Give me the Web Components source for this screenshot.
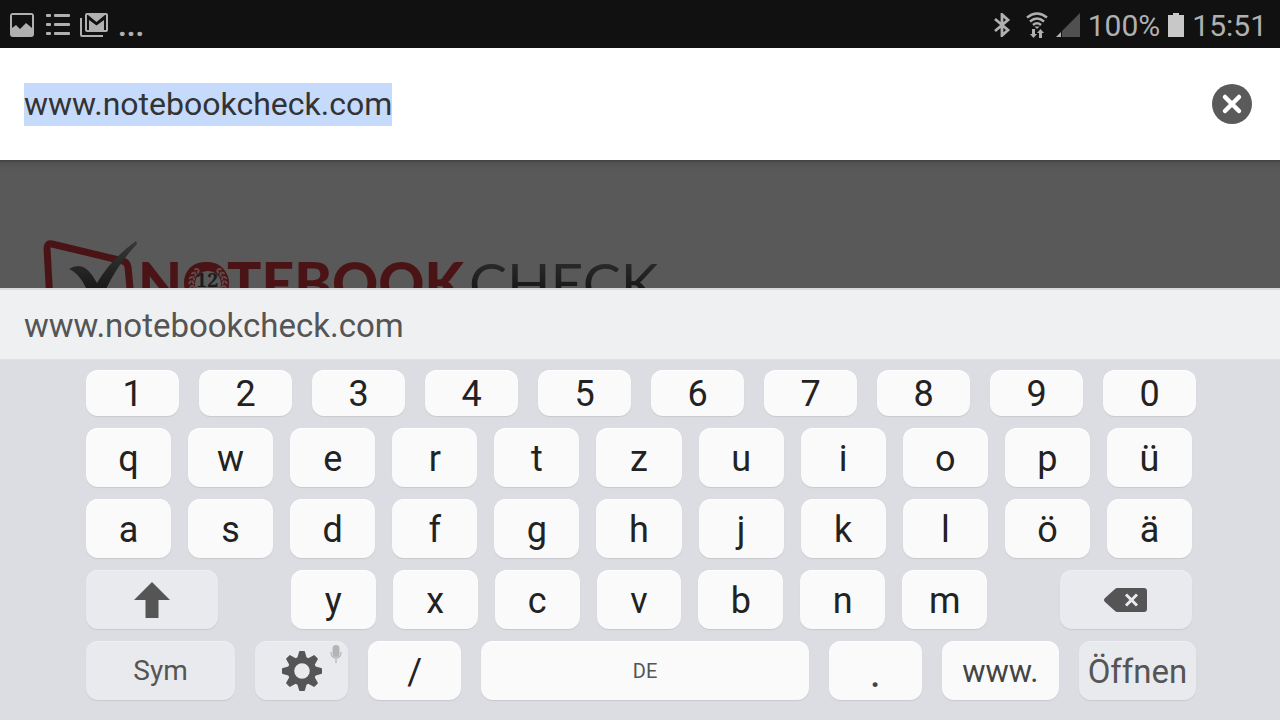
<!DOCTYPE html>
<html lang="de">
<head>
<meta charset="utf-8">
<meta name="viewport" content="width=device-width, initial-scale=1">
<title>www.notebookcheck.com</title>
<style>
  body {
    margin: 0;
    font-family: Roboto, "Noto Sans", sans-serif;
    background: #dcdde2;
  }
</style>
</head>
<body>
<phone-screen>
  <status-bar slot="status"></status-bar>
  <address-bar slot="address" value="www.notebookcheck.com"></address-bar>
  <web-page slot="page"></web-page>
  <word-suggestions slot="keyboard">www.notebookcheck.com</word-suggestions>
  <soft-keyboard slot="keyboard"></soft-keyboard>
</phone-screen>

<script>
function attach(element, html) {
  const template = document.createElement('template');
  template.innerHTML = html;
  const root = element.attachShadow({ mode: 'open' });
  root.appendChild(template.content.cloneNode(true));
  return root;
}

class PhoneScreen extends HTMLElement {
  constructor() {
    super();
    attach(this, `
      <style>
        :host {
          display: flex;
          flex-direction: column;
          min-height: 100vh;
        }
        main {
          flex: 1;
          display: flex;
          min-height: 128px;
        }
      </style>
      <slot name="status"></slot>
      <slot name="address"></slot>
      <main><slot name="page"></slot></main>
      <slot name="keyboard"></slot>
    `);
  }
}

class StatusBar extends HTMLElement {
  constructor() {
    super();
    attach(this, `
      <style>
        :host {
          display: flex;
          justify-content: space-between;
          box-sizing: border-box;
          height: 48px;
          padding: 0 13px 0 10px;
          background: #111;
          color: #b0b0b0;
          font-size: 30px;
          line-height: 48px;
        }
        div {
          display: flex;
          align-items: center;
        }
        span, time { padding-top: 4px; }
        .notifications { gap: 10px; }
        .more { font-weight: 700; }
        .system { gap: 8px; }
        svg { display: block; margin-top: 2px; fill: currentColor; }
      </style>
      <div class="notifications">
        <svg width="24" height="24" viewBox="0 0 24 24">
          <path fill-rule="evenodd" d="M3 0h18a3 3 0 0 1 3 3v18a3 3 0 0 1-3 3H3a3 3 0 0 1-3-3V3a3 3 0 0 1 3-3zM2 2v13l4-3 4 4 6-6 6 5V2z"/>
        </svg>
        <svg width="26" height="24" viewBox="0 0 26 24">
          <g transform="translate(2 0)">
            <rect y="1" width="5" height="3" rx="1"/><rect x="8" y="1" width="16" height="3" rx="1"/>
            <rect y="10" width="5" height="3" rx="1"/><rect x="8" y="10" width="16" height="3" rx="1"/>
            <rect y="19" width="5" height="3" rx="1"/><rect x="8" y="19" width="16" height="3" rx="1"/>
          </g>
        </svg>
        <svg width="28" height="24" viewBox="0 0 28 24">
          <path d="M0 5h2v17h21v2H2a2 2 0 0 1-2-2z"/>
          <path fill-rule="evenodd" d="M7 0h19a2 2 0 0 1 2 2v15a2 2 0 0 1-2 2H7a2 2 0 0 1-2-2V2a2 2 0 0 1 2-2zM7 2v15h2V7l7.500 5.500L24 7v10h2V2h-1l-8.500 7L8 2z"/>
        </svg>
        <span class="more">...</span>
      </div>
      <div class="system">
        <svg width="24" height="24" viewBox="0 0 24 24" aria-label="Bluetooth">
          <path d="M1 6l13 11-6 5.500V1.500L14 7 1 18" fill="none" stroke="currentColor" stroke-width="2.800"/>
        </svg>
        <svg width="22" height="26" viewBox="0 0 22 26" aria-label="WLAN">
          <g fill="none" stroke="currentColor" stroke-width="2.400">
            <path d="M1 5.500Q11-2.500 21 5.500"/>
            <path d="M4 9.500q7-6 14 0"/>
            <path d="M7 13q4-3.500 8 0"/>
          </g>
          <path d="M8.500 14.500h5L11 17z"/>
          <path d="M6 17h3v5h2l-3.500 4L4 22h2zM13 26h3v-5h2l-3.500-4-3.500 4h2z"/>
        </svg>
        <svg width="24" height="24" viewBox="0 0 24 24" aria-label="Signal">
          <path d="M6 18v6h18V0z" fill="#505050"/>
          <path d="M0 24l5-5v5z"/>
        </svg>
        <span>100%</span>
        <svg width="16" height="24" viewBox="0 0 16 24" aria-label="Akku">
          <path d="M5 0h6v2h5v22H0V2h5z" fill="#c8c8c8"/>
        </svg>
        <time>15:51</time>
      </div>
    `);
  }
}

class AddressBar extends HTMLElement {
  constructor() {
    super();
    this._shadowRoot = attach(this, `
      <style>
        :host {
          display: flex;
          align-items: center;
          gap: 24px;
          box-sizing: border-box;
          height: 112px;
          padding: 0 28px 0 24px;
          background: #fff;
        }
        input {
          flex: 1;
          min-width: 0;
          height: 43px;
          padding: 0;
          border: 0;
          outline: 0;
          background: none;
          color: #333;
          caret-color: transparent;
          font: 32px/43px Roboto, "Noto Sans", sans-serif;
        }
        input::selection {
          background: #c6dafc;
          color: #333;
        }
        button {
          width: 40px;
          height: 40px;
          padding: 0;
          border: 0;
          border-radius: 50%;
          background: #5a5a5a;
        }
        svg { display: block; }
      </style>
      <input type="text" aria-label="Adresse" spellcheck="false">
      <button type="button" aria-label="Löschen">
        <svg width="40" height="40" viewBox="0 0 40 40">
          <path d="M13 13l14 14M27 13L13 27" stroke="#fff" stroke-width="4.500" stroke-linecap="round"/>
        </svg>
      </button>
    `);
    this.$input = this._shadowRoot.querySelector('input');
    this.$button = this._shadowRoot.querySelector('button');
    this.$button.addEventListener('click', this._onClear.bind(this));
  }

  connectedCallback() {
    this.$input.value = this.getAttribute('value');
    this.$input.focus();
    this.$input.select();
  }

  type(text) {
    this.$input.setRangeText(text, this.$input.selectionStart, this.$input.selectionEnd, 'end');
    this.$input.focus();
  }

  erase() {
    const { selectionStart: start, selectionEnd: end } = this.$input;
    this.$input.setRangeText('', start === end ? Math.max(0, start - 1) : start, end, 'end');
    this.$input.focus();
  }

  _onClear() {
    this.$input.value = '';
    this.$input.focus();
  }
}

// the page behind the keyboard, dimmed while the address is edited
class WebPage extends HTMLElement {
  constructor() {
    super();
    const root = attach(this, `
      <style>
        :host {
          flex: 1;
          display: block;
          height: 128px;
          overflow: hidden;
          background: linear-gradient(#424242, #525252 3px, #595959 10px);
        }
        svg { display: block; }
        .red { fill: #4a1416; }
        .word { font-family: Lato, sans-serif; }
      </style>
      <svg width="700" height="160" viewBox="0 0 700 160" role="img" aria-label="Notebookcheck">
        <defs>
          <linearGradient id="ink" x1="0" y1="80" x2="0" y2="130" gradientUnits="userSpaceOnUse">
            <stop offset="0" stop-color="#383838"/>
            <stop offset="1" stop-color="#181818"/>
          </linearGradient>
        </defs>
        <path d="M51 160L47 88q0-5 5-4l71 17q4 1 5 6l5 53" fill="none" stroke="#4a1416" stroke-width="7"/>
        <path d="M69 109q13-8 23 6l5 8q14-24 39-42l1 3q-25 26-37 60l-8 0q-9-30-23-35z" fill="url(#ink)"/>
        <text class="word red" x="138" y="144" font-size="57" font-weight="900">NOTEBOOK</text>
        <text class="word" x="469" y="144" font-size="57" font-weight="400" fill="url(#ink)">CHECK</text>
        <circle cx="208" cy="123" r="21" class="red"/>
        <g class="leaves" fill="#62494a"></g>
        <circle cx="208" cy="124" r="13" fill="#595959"/>
        <text x="207" y="127" font-family="Noto Serif, Liberation Serif, serif" font-size="20" font-weight="700" text-anchor="middle" fill="#1c1c1c">12</text>
      </svg>
    `);
    const leaves = root.querySelector('.leaves');
    for (let angle = 40; angle <= 120; angle += 16) {
      [angle, -angle].forEach((a) => {
        const side = Math.sign(a);
        [15, 18].forEach((r, i) => {
          const leaf = document.createElementNS('http://www.w3.org/2000/svg', 'ellipse');
          leaf.setAttribute('rx', 1.1);
          leaf.setAttribute('ry', 2.4);
          leaf.setAttribute('transform', `translate(208 123) rotate(${a}) translate(0 ${-r}) rotate(${side * (i ? 55 : 120)})`);
          leaves.appendChild(leaf);
        });
      });
    }
  }
}

class WordSuggestions extends HTMLElement {
  constructor() {
    super();
    attach(this, `
      <style>
        :host {
          display: flex;
          box-sizing: border-box;
          height: 72px;
          padding: 0 24px;
          background: #eff0f2;
          border-top: 2px solid #dadada;
          border-bottom: 1px solid #e2e3e6;
        }
        button {
          padding: 2px 0 0;
          border: 0;
          background: none;
          color: #555;
          font: 33px/40px Roboto, "Noto Sans", sans-serif;
        }
      </style>
      <button type="button"><slot></slot></button>
    `);
  }
}

class SoftKey extends HTMLElement {
  constructor() {
    super();
    attach(this, `
      <style>
        :host {
          display: flex;
          flex: var(--width, 1) 1 0;
          min-width: 0;
        }
        button {
          position: relative;
          display: flex;
          flex: 1;
          align-items: center;
          justify-content: center;
          min-width: 0;
          padding: 2px 0 0;
          border: 0;
          border-radius: 12px;
          background: #fafafa;
          box-shadow: 0 1px 1px #c8c9ce, inset 0 1px #fff;
          color: #222;
          font: 36px/40px Roboto, "Noto Sans", sans-serif;
        }
        button:active { background: #e0e1e6; }
        :host([kind="function"]) button {
          background: #e9eaee;
          box-shadow: 0 1px 1px #c8c9ce, inset 0 1px #efeff3;
          color: #555;
        }
        :host([title]) button { padding: 0; }
        :host([size="dot"]) button { font-size: 44px; color: #444; }
        :host([size="open"]) button { font-size: 33px; }
        :host([size="word"]) button { font-size: 31px; color: #444; }
        :host([size="sym"]) button { padding: 0; font-size: 28px; }
        :host([size="space"]) button { padding: 0; font-size: 20px; color: #555; }
      </style>
      <button type="button"><slot></slot></button>
    `);
  }

  connectedCallback() {
    if (this.title) {
      this.shadowRoot.querySelector('button').setAttribute('aria-label', this.title);
    }
  }
}

class KeyRow extends HTMLElement {
  constructor() {
    super();
    attach(this, `
      <style>
        :host {
          display: flex;
          gap: 17px;
          height: 59px;
          padding-right: 4px;
        }
        :host([wide]) {
          gap: 20px;
          padding-right: 0;
        }
        :host([numbers]) { height: 46px; }
      </style>
      <slot></slot>
    `);
  }
}

class SoftKeyboard extends HTMLElement {
  constructor() {
    super();
    const keys = (letters) => [...letters].map((letter) => `<soft-key>${letter}</soft-key>`).join('');
    this._shadowRoot = attach(this, `
      <style>
        :host {
          display: flex;
          flex-direction: column;
          gap: 12px;
          padding: 10px 84px 20px 86px;
          background: #dcdde2;
        }
        svg { display: block; fill: #555; }
        .gap { flex: 39 1 0; }
        .letters { --width: 85; }
        .edge { --width: 132; }
        .sym { --width: 149; }
        .small { --width: 93; }
        .space { --width: 327; }
        .word { --width: 117; }
        .mic {
          position: absolute;
          top: 4px;
          right: 6px;
        }
      </style>
      <key-row wide numbers>${keys('1234567890')}</key-row>
      <key-row>${keys('qwertzuiopü')}</key-row>
      <key-row>${keys('asdfghjklöä')}</key-row>
      <key-row class="letters">
        <soft-key class="edge" kind="function" title="Umschalttaste">
          <svg width="36" height="36" viewBox="0 0 36 36"><path d="M18 0l18 18H24.500v18h-13V18H0z"/></svg>
        </soft-key>
        <span class="gap"></span>
        ${keys('yxcvbnm')}
        <span class="gap"></span>
        <soft-key class="edge" kind="function" title="Rücktaste">
          <svg width="44" height="24" viewBox="0 0 44 24">
            <path d="M13 0h27a3 3 0 0 1 3 3v18a3 3 0 0 1-3 3H13q-1 0-2-1L1 14q-2-2 0-4L11 1q1-1 2-1z"/>
            <path d="M22 6.500l11 11M33 6.500l-11 11" stroke="#e9eaee" stroke-width="3"/>
          </svg>
        </soft-key>
      </key-row>
      <key-row wide>
        <soft-key class="sym" kind="function" size="sym">Sym</soft-key>
        <soft-key class="small" kind="function" title="Einstellungen">
          <svg class="gear" width="40" height="40" viewBox="-20 -20 40 40">
            <g class="teeth"></g>
            <circle r="11" fill="none" stroke="#555" stroke-width="6.500"/>
          </svg>
          <svg class="mic" width="12" height="18" viewBox="0 0 12 18">
            <rect x="2.500" width="7" height="12" rx="3.500" fill="#b4b4b6"/>
            <path d="M1 7v1a5 5 0 0 0 10 0V7M6 13v5" fill="none" stroke="#b4b4b6" stroke-width="1.200"/>
          </svg>
        </soft-key>
        <soft-key class="small">/</soft-key>
        <soft-key class="space" size="space">DE</soft-key>
        <soft-key class="small" size="dot">.</soft-key>
        <soft-key class="word" size="word">www.</soft-key>
        <soft-key class="word" kind="function" size="open">Öffnen</soft-key>
      </key-row>
    `);

    const teeth = this._shadowRoot.querySelector('.teeth');
    for (let i = 0; i < 8; i += 1) {
      const tooth = document.createElementNS('http://www.w3.org/2000/svg', 'path');
      tooth.setAttribute('d', 'M-5-12L-3-19Q-3-20-2-20H2Q3-20 3-19L5-12z');
      tooth.setAttribute('transform', `rotate(${i * 45})`);
      teeth.appendChild(tooth);
    }
    this.addEventListener('mousedown', (event) => event.preventDefault());
    this._shadowRoot.addEventListener('click', this._onClick.bind(this));
  }

  _onClick(event) {
    const key = event.target.closest('soft-key');
    if (key === null) return;
    const bar = document.querySelector('address-bar');
    if (key.title === 'Rücktaste') {
      bar.erase();
    } else if (key.getAttribute('size') === 'space') {
      bar.type(' ');
    } else if (key.getAttribute('kind') !== 'function') {
      bar.type(key.textContent);
    }
  }
}

customElements.define('phone-screen', PhoneScreen);
customElements.define('status-bar', StatusBar);
customElements.define('address-bar', AddressBar);
customElements.define('web-page', WebPage);
customElements.define('word-suggestions', WordSuggestions);
customElements.define('soft-key', SoftKey);
customElements.define('key-row', KeyRow);
customElements.define('soft-keyboard', SoftKeyboard);
</script>
</body>
</html>
